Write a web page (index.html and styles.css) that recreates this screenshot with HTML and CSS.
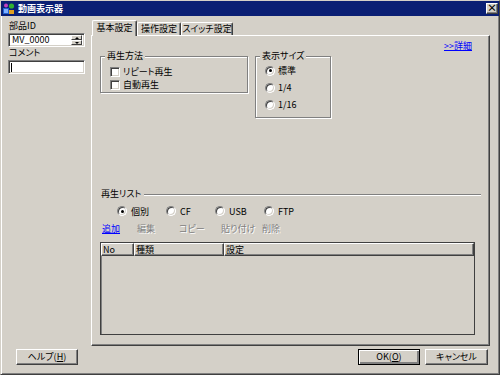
FILE: index.html
```html
<!DOCTYPE html>
<html>
  <head>
    <title>動画表示器</title>
    <link rel="stylesheet" href="styles.css">
  </head>

  <body>
    <div class="window">
      <div class="titlebar">
        <svg class="app-icon" width="12" height="12" viewBox="0 0 12 12">
          <rect x="0" y="5" width="6" height="6" fill="#2060d0" />
          <rect x="1" y="6" width="4" height="4" fill="#80b0ff" />
          <circle cx="8.5" cy="3" r="2.6" fill="#30b030" />
          <circle cx="3" cy="2.5" r="2" fill="#c040c0" />
          <rect x="6" y="7" width="5" height="4" fill="#e0a020" />
        </svg>
        <span class="title">動画表示器</span>
        <span class="close">×</span>
      </div>

      <div class="body">
        <div class="side">
          <div class="label">部品ID</div>
          <div class="textbox">
            <span class="value">MV_0000</span>
            <div class="spin">
              <i class="up"></i>
              <i class="down"></i>
            </div>
          </div>
          <div class="label">コメント</div>
          <div class="textbox">
            <span class="caret"></span>
          </div>
        </div>

        <div class="tabs">
          <div class="tab-strip">
            <div class="tab active">基本設定</div>
            <div class="tab">操作設定</div>
            <div class="tab wide">スイッチ設定</div>
          </div>

          <div class="panel">
            <div class="detail"><a href="#">&gt;&gt;詳細</a></div>

            <div class="groups">
              <fieldset class="group play-mode">
                <legend>再生方法</legend>
                <label class="check"><span class="checkbox"></span>リピート再生</label>
                <label class="check"><span class="checkbox"></span>自動再生</label>
              </fieldset>

              <fieldset class="group size">
                <legend>表示サイズ</legend>
                <label class="option"><span class="radio on"></span>標準</label>
                <label class="option"><span class="radio"></span>1/4</label>
                <label class="option"><span class="radio"></span>1/16</label>
              </fieldset>
            </div>

            <div class="section-title">
              <span>再生リスト</span>
              <div class="etched"></div>
            </div>

            <div class="sources">
              <label class="source"><span class="radio on"></span>個別</label>
              <label class="source"><span class="radio"></span>CF</label>
              <label class="source"><span class="radio"></span>USB</label>
              <label class="source"><span class="radio"></span>FTP</label>
            </div>

            <div class="actions">
              <a href="#" class="add">追加</a>
              <span class="disabled edit">編集</span>
              <span class="disabled copy">コピー</span>
              <span class="disabled paste">貼り付け</span>
              <span class="disabled">削除</span>
            </div>

            <div class="list">
              <div class="list-head">
                <span class="col-no">No</span>
                <span class="col-kind">種類</span>
                <span class="col-set">設定</span>
              </div>
            </div>
          </div>
        </div>
      </div>

      <div class="footer">
        <button class="btn help">ヘルプ(<u>H</u>)</button>
        <button class="btn ok">OK(<u>O</u>)</button>
        <button class="btn cancel">キャンセル</button>
      </div>
    </div>
  </body>
</html>
```

FILE: styles.css
```css
/* dialog in classic windows look */
body {
  margin: 0;
  font-family: "Noto Sans CJK JP", sans-serif;
  font-size: 9px;
  font-feature-settings: "palt";
  color: #000;
  background: #d4d0c8;
}

.window {
  width: 500px;
  height: 375px;
  box-sizing: border-box;
  background: #d4d0c8;
  border: 1px solid;
  border-color: #d4d0c8 #404040 #404040 #d4d0c8;
  box-shadow: inset 1px 1px #fff, inset -1px -1px #808080;
}

.titlebar {
  height: 15px;
  background: #0a1f74;
  display: flex;
  align-items: center;
  padding-left: 2px;
}

.app-icon {
  margin-right: 3px;
}

.title {
  color: #fff;
  font-weight: bold;
  line-height: 15px;
  flex: 1;
}

.close {
  width: 12px;
  height: 11px;
  box-sizing: border-box;
  margin-right: 1px;
  background: #d4d0c8;
  border: 1px solid;
  border-color: #fff #404040 #404040 #fff;
  box-shadow: inset -1px -1px #808080;
  font-size: 10px;
  font-weight: bold;
  line-height: 8px;
  text-align: center;
}

.body {
  display: flex;
  padding: 4px 0 0 7px;
}

.side {
  width: 77px;
}

.label {
  height: 12px;
  line-height: 12px;
  padding-left: 1px;
}

.label + .textbox {
  margin-top: 1px;
}

.textbox {
  height: 14px;
  box-sizing: border-box;
  background: #fff;
  border: 1px solid;
  border-color: #808080 #fff #fff #808080;
  box-shadow: inset 1px 1px #404040, inset -1px -1px #d4d0c8;
  display: flex;
  align-items: center;
  padding: 0 2px 0 2px;
}

.value {
  flex: 1;
  line-height: 12px;
  padding-left: 1px;
}

.spin {
  width: 11px;
  height: 10px;
  display: flex;
  flex-direction: column;
}

.spin i {
  flex: 1;
  background: #d4d0c8;
  border: 1px solid;
  border-color: #fff #404040 #404040 #fff;
  box-sizing: border-box;
  display: flex;
  align-items: center;
  justify-content: center;
}

.spin i::after {
  content: "";
  border-left: 2px solid transparent;
  border-right: 2px solid transparent;
}

.spin .up::after {
  border-bottom: 2px solid #000;
}

.spin .down::after {
  border-top: 2px solid #000;
}

.caret {
  width: 1px;
  height: 9px;
  background: #000;
}

.tabs {
  margin-left: 6px;
  width: 399px;
}

.tab-strip {
  height: 15px;
  display: flex;
  align-items: flex-end;
  padding-left: 1px;
}

.tab {
  height: 13px;
  width: 44px;
  box-sizing: border-box;
  border: 1px solid;
  border-bottom: none;
  border-color: #fff #404040 #fff #fff;
  box-shadow: inset -1px 0 #808080;
  border-radius: 2px 2px 0 0;
  line-height: 12px;
  text-align: center;
}

.tab.active {
  height: 16px;
  width: 45px;
  margin-bottom: -1px;
  background: #d4d0c8;
  position: relative;
  z-index: 1;
  line-height: 14px;
}

.tab.wide {
  width: 52px;
}

.panel {
  height: 311px;
  box-sizing: border-box;
  border: 1px solid;
  border-color: #fff #404040 #404040 #fff;
  box-shadow: inset -1px -1px #808080;
}

.detail {
  text-align: right;
  padding-right: 17px;
  margin-top: 4px;
  height: 12px;
  line-height: 12px;
}

a {
  color: #0000ff;
}

.groups {
  display: flex;
  gap: 7px;
  margin-top: -2px;
  padding-left: 8px;
}

.group {
  margin: 0;
  padding: 0;
  min-inline-size: 0;
  box-sizing: border-box;
  border: 1px solid #808080;
  box-shadow: inset 1px 1px #fff, 1px 1px #fff;
}

.group legend {
  padding: 0 2px;
  margin-left: 4px;
  line-height: 12px;
  background: #d4d0c8;
  position: relative;
}

.play-mode {
  width: 148px;
  height: 43px;
}

.size {
  width: 76px;
  height: 68px;
}

.check {
  display: flex;
  align-items: center;
  height: 13px;
  padding-left: 9px;
}

.check:first-of-type {
  margin-top: 3px;
}

.checkbox {
  width: 10px;
  height: 10px;
  box-sizing: border-box;
  background: #fff;
  border: 1px solid;
  border-color: #808080 #fff #fff #808080;
  box-shadow: inset 1px 1px #404040, inset -1px -1px #d4d0c8;
  margin-right: 3px;
}

.option {
  display: flex;
  align-items: center;
  height: 17px;
  padding-left: 9px;
}

.radio {
  width: 10px;
  height: 10px;
  box-sizing: border-box;
  border-radius: 50%;
  background: #fff;
  border: 1px solid;
  border-color: #808080 #fff #fff #808080;
  box-shadow: inset 1px 1px #404040, inset -1px -1px #d4d0c8;
  margin-right: 3px;
  display: flex;
  align-items: center;
  justify-content: center;
}

.radio.on::after {
  content: "";
  width: 3px;
  height: 3px;
  background: #000;
  border-radius: 50%;
}

.section-title {
  display: flex;
  align-items: center;
  margin-top: 70px;
  padding-left: 9px;
  padding-right: 8px;
  height: 12px;
  line-height: 12px;
}

.etched {
  flex: 1;
  margin-left: 3px;
  margin-top: 1px;
  border-top: 1px solid #808080;
  border-bottom: 1px solid #fff;
}

.sources {
  display: flex;
  margin-top: 5px;
  padding-left: 25px;
  height: 12px;
}

.source {
  width: 49px;
  display: flex;
  align-items: center;
}

.source .radio {
  margin-right: 4px;
}

.actions {
  display: flex;
  margin-top: 6px;
  padding-left: 10px;
  height: 12px;
  line-height: 12px;
}

.actions .add {
  width: 35px;
}

.disabled {
  color: #808080;
  text-shadow: 1px 1px #fff;
}

.edit,
.copy {
  width: 42px;
}

.paste {
  width: 41px;
}

.list {
  margin: 7px 0 0 8px;
  width: 375px;
  height: 93px;
  box-sizing: border-box;
  border: 1px solid #404040;
  box-shadow: inset 1px 1px #808080;
}

.list-head {
  display: flex;
  height: 13px;
  line-height: 11px;
}

.list-head span {
  box-sizing: border-box;
  border: 1px solid;
  border-color: #fff #404040 #404040 #fff;
  box-shadow: inset -1px -1px #808080;
  padding-left: 1px;
}

.col-no {
  width: 33px;
}

.col-kind {
  width: 90px;
}

.col-set {
  flex: 1;
}

.footer {
  display: flex;
  margin-top: 3px;
  padding: 0 11px 0 15px;
}

.btn {
  height: 16px;
  width: 62px;
  box-sizing: border-box;
  padding: 0;
  font-family: inherit;
  font-size: 9px;
  font-feature-settings: "palt";
  line-height: 12px;
  background: #d4d0c8;
  border: 1px solid;
  border-color: #fff #404040 #404040 #fff;
  box-shadow: inset -1px -1px #808080;
  color: #000;
}

.help {
  margin-right: auto;
}

.ok {
  border-color: #000;
  box-shadow: inset 1px 1px #fff, inset -2px -2px #808080;
  margin-right: 5px;
}

.cancel {
  width: 63px;
}
```
